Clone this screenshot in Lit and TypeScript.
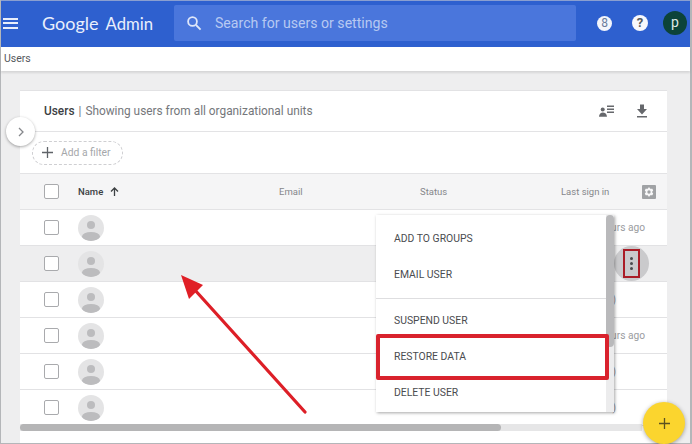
import { LitElement, html, css } from "lit";
import { customElement } from "lit/decorators.js";

const rows = [
  { peek: "urs ago" },
  { peek: "", hover: true },
  { peek: ")" },
  { peek: "urs ago" },
  { peek: ")" },
  { peek: ")" },
];

@customElement("app-root")
export class AppRoot extends LitElement {
  static styles = css`
    :host { display: block; width: 692px; height: 444px; position: relative; overflow: hidden; font-family: Roboto, "Liberation Sans", sans-serif; background: #eeeeef; box-sizing: border-box; }
    * { box-sizing: border-box; }
    .page { width: 692px; height: 444px; display: flex; flex-direction: column; border: 1px solid #b4b6b9; border-top: 0; border-right-width: 2px; }
    .top { height: 47px; background: #2e60cf; border-top: 1px solid #8a9fd0; display: flex; align-items: center; padding: 0 3px 2px 2px; flex: none; }
    .burger { width: 15px; height: 11px; display: flex; flex-direction: column; justify-content: space-between; flex: none; }
    .burger i { display: block; height: 2px; background: #e8eefb; }
    .brand { margin-left: 24px; width: 132px; color: #e9effc; font-family: Lato, Roboto, sans-serif; font-size: 16.7px; white-space: nowrap; flex: none; }
    .brand b { font-weight: 400; margin-right: 7px; font-size: 18px; }
    .search { width: 402px; height: 36px; background: #4a76dc; border-radius: 2px; display: flex; align-items: center; padding-left: 12px; gap: 13px; color: #b7c9f2; font-size: 14.1px; flex: none; }
    .search svg { flex: none; }
    .actions { margin-left: 21px; display: flex; align-items: center; flex: none; }
    .g { width: 15px; height: 15px; border-radius: 50%; background: #f3f5fb; color: #6a7c9c; font-size: 12px; line-height: 15px; text-align: center; }
    .help { margin-left: 20px; width: 16px; height: 16px; border-radius: 50%; background: #f7f8fc; color: #55585d; font-size: 13px; font-weight: 700; line-height: 16px; text-align: center; }
    .me { margin-left: 15px; width: 24px; height: 24px; border-radius: 50%; background: #0c4339; color: #dfe9e6; font-size: 14px; line-height: 22px; text-align: center; }
    .crumb { height: 24px; background: #fff; color: #55585d; font-size: 10.5px; line-height: 23px; padding-left: 3px; flex: none; box-shadow: 0 2px 2px rgba(0,0,0,.1); }
    .body { flex: 1; min-height: 0; padding: 19px 23px 0 19px; }
    .card { height: 100%; background: #fff; border-top: 1px solid #e2e2e4; display: flex; flex-direction: column; }
    .title { height: 41px; display: flex; align-items: center; padding: 0 18px 0 24px; color: #75777b; font-size: 11.85px; border-bottom: 1px solid #e3e3e5; flex: none; }
    .title strong { font-weight: 500; color: #3c4043; }
    .title .sep { margin: 0 4px; }
    .title .grow { flex: 1; }
    .title svg { display: block; }
    .title svg + svg { margin-left: 20px; }
    .filter-row { height: 42px; flex: none; display: flex; align-items: center; padding-left: 12px; border-bottom: 1px solid #e3e3e5; }
    .filter { width: 91px; height: 24px; border: 1px dashed #cfcfd2; border-radius: 12px; display: flex; align-items: center; gap: 8px; padding-left: 9px; font-size: 10.3px; color: #a5a7aa; }
    .head { height: 36px; flex: none; display: flex; align-items: center; background: #f5f5f6; padding-left: 23.5px; font-size: 9.5px; color: #85878b; border-bottom: 1px solid #e3e3e5; }
    .check { width: 15px; height: 15px; border: 1.5px solid #a9aaad; border-radius: 2px; background: #fff; flex: none; }
    .name { margin-left: 19.5px; color: #3c4043; font-weight: 500; display: flex; align-items: center; gap: 7px; width: 201px; }
    .email { width: 141px; }
    .status { width: 141px; }
    .sign { width: 81px; }
    .row { height: 36px; flex: none; display: flex; align-items: center; padding-left: 23.5px; border-bottom: 1px solid #e2e2e4; position: relative; }
    .row.hover { background: #eeeeef; }
    .avatar { margin-left: 19.5px; width: 26px; height: 26px; border-radius: 50%; background: #e4e4e5; position: relative; overflow: hidden; flex: none; }
    .avatar::before { content: ""; position: absolute; left: 9px; top: 6px; width: 8px; height: 8px; border-radius: 50%; background: #bcbcbe; }
    .avatar::after { content: ""; position: absolute; left: 4px; top: 17px; width: 18px; height: 9px; border-radius: 50%; background: #bcbcbe; }
    .peek { position: absolute; right: 22px; font-size: 10.2px; color: #9a9ca0; }
    .peek.short { right: 51px; }
    .bar { height: 7px; margin-top: -2px; background: #e6e6e7; flex: none; position: relative; width: 622px; }
    .bar i { display: block; width: 481px; height: 7px; border-radius: 4px; background: #b5b5b6; }
    .more { position: absolute; left: 614px; top: 246px; width: 35px; height: 35px; border-radius: 50%; background: #cacacc; display: flex; align-items: center; justify-content: center; }
    .more-box { width: 17px; height: 29px; border: 2px solid #aa1c26; display: flex; flex-direction: column; align-items: center; justify-content: center; gap: 2px; }
    .more-box i { width: 3px; height: 3px; border-radius: 50%; background: #4a4b4e; }
    .menu { position: absolute; left: 376px; top: 215px; width: 238px; height: 197px; background: #fff; box-shadow: 1px 1px 3px rgba(0,0,0,.35); padding-top: 5px; font-size: 10.4px; color: #4a4c50; }
    .item { height: 36px; display: flex; align-items: center; padding-left: 18px; }
    .rule { height: 1px; background: #dedee0; margin: 6px 8px 3px 0; }
    .track { position: absolute; right: 0; top: 0; bottom: 0; width: 8px; background: #ececed; }
    .track i { display: block; height: 132px; background: #b9b9bb; border-radius: 4px; }
    .mark { position: absolute; left: 376px; top: 334px; width: 233px; height: 46px; border: 4px solid #d9222d; border-radius: 2px; }
    .fab { position: absolute; left: 643px; top: 402px; width: 42px; height: 42px; border-radius: 50%; background: #fbd52e; box-shadow: 0 1px 4px rgba(0,0,0,.35); display: flex; align-items: center; justify-content: center; }
    .toggle { position: absolute; left: 6px; top: 117px; width: 29px; height: 29px; border-radius: 50%; background: #fff; box-shadow: 0 1px 3px rgba(0,0,0,.35); display: flex; align-items: center; justify-content: center; }
    .arrow { position: absolute; left: 0; top: 0; pointer-events: none; }
  `;

  render() {
    return html`
      <div class="page">
        <div class="top">
          <div class="burger"><i></i><i></i><i></i></div>
          <div class="brand"><b>Google</b>Admin</div>
          <div class="search">
            <svg width="16" height="16" viewBox="0 0 16 16" fill="none" stroke="#dfe7fa" stroke-width="1.8"><circle cx="6.5" cy="6.5" r="4.4"/><path d="M10 10l4.6 4.6"/></svg>
            <span>Search for users or settings</span>
          </div>
          <div class="actions">
            <div class="g">8</div>
            <div class="help">?</div>
            <div class="me">p</div>
          </div>
        </div>
        <div class="crumb">Users</div>
        <div class="body">
          <div class="card">
            <div class="title">
              <strong>Users</strong><span class="sep">|</span><span>Showing users from all organizational units</span>
              <span class="grow"></span>
              <svg width="16" height="14" viewBox="0 0 16 14" fill="#66686c"><circle cx="3.7" cy="5.5" r="2"/><path d="M0 12.800c0-2.800 2-4.300 3.900-4.300S8 10 8 12.800z"/><path d="M8 1.600h7v1.400H8zM8 4.600h7v1.400H8zM8 7.600h7v1.400H8z"/></svg>
              <svg width="14" height="15" viewBox="0 0 14 15" fill="#66686c"><path d="M5 .5h4V5h3l-5 5.500L2 5h3zM2 12h10v1.400H2z"/></svg>
            </div>
            <div class="filter-row">
              <div class="filter">
                <svg width="11" height="11" viewBox="0 0 11 11" fill="none" stroke="#5f6368" stroke-width="1.3"><path d="M5.5 0v11M0 5.500h11"/></svg>
                <span>Add a filter</span>
              </div>
            </div>
            <div class="head">
              <div class="check"></div>
              <div class="name">
                <span>Name</span>
                <svg width="9" height="9" viewBox="0 0 9 9" fill="none" stroke="#3c4043" stroke-width="1.3"><path d="M4.500 9V1M1 4.500l3.500-3.500L8 4.500"/></svg>
              </div>
              <div class="email">Email</div>
              <div class="status">Status</div>
              <div class="sign">Last sign in</div>
              <svg width="14" height="14" viewBox="0 0 15 15"><rect width="15" height="15" rx="1" fill="#a0a2a5"/><path d="M7.500 2.200l1.300 1.900 2.300-.2.900 2-1.300 1.600 1.300 1.600-.9 2-2.300-.2-1.300 1.900-1.300-1.900-2.300.2-.9-2 1.300-1.600-1.300-1.600.9-2 2.300.2z" fill="#f8f8f9"/><circle cx="7.500" cy="7.500" r="1.800" fill="#a0a2a5"/></svg>
            </div>
            ${rows.map(
              (r) => html`<div class="row ${r.hover ? "hover" : ""}">
                <div class="check"></div>
                <div class="avatar"></div>
                ${r.peek ? html`<span class="peek ${r.peek === ")" ? "short" : ""}">${r.peek}</span>` : ""}
              </div>`
            )}
            <div class="bar"><i></i></div>
          </div>
        </div>
      </div>
      <div class="more"><div class="more-box"><i></i><i></i><i></i></div></div>
      <div class="toggle">
        <svg width="8" height="10" viewBox="0 0 8 10" fill="none" stroke="#85878b" stroke-width="1.3"><path d="M2 1l4 4-4 4"/></svg>
      </div>
      <div class="menu">
        <div class="item">ADD TO GROUPS</div>
        <div class="item">EMAIL USER</div>
        <div class="rule"></div>
        <div class="item">SUSPEND USER</div>
        <div class="item">RESTORE DATA</div>
        <div class="item">DELETE USER</div>
        <div class="track"><i></i></div>
      </div>
      <div class="mark"></div>
      <div class="fab">
        <svg width="11" height="11" viewBox="0 0 11 11" fill="none" stroke="#5c5220" stroke-width="1.3"><path d="M5.5 0v11M0 5.500h11"/></svg>
      </div>
      <svg class="arrow" width="692" height="444" viewBox="0 0 692 444">
        <path d="M305 412L194 289" stroke="#dd1f27" stroke-width="3.2" stroke-linecap="round" fill="none"/>
        <path d="M181 275L203 285L189 299z" fill="#e01f26"/>
      </svg>
    `;
  }
}
